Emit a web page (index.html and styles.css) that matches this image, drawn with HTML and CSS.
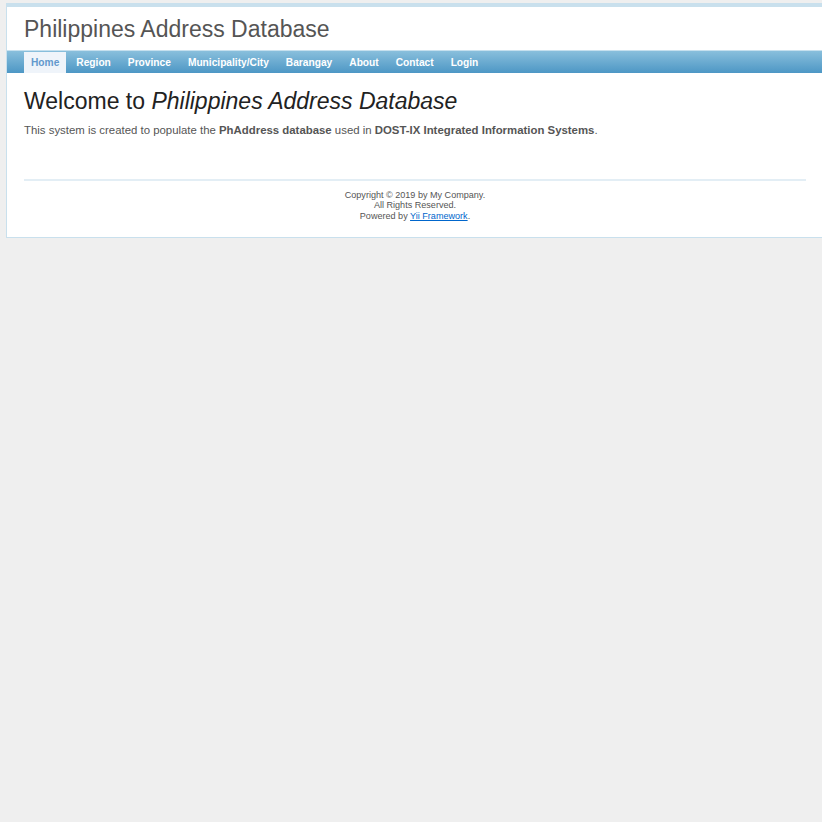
FILE: index.html
```html
<!DOCTYPE html>
<html lang="en">
<head>
<meta charset="utf-8">
<title>Philippines Address Database</title>
<link rel="stylesheet" href="styles.css">
</head>
<body>
<div class="page">
  <div class="header">
    <div class="logo">Philippines Address Database</div>
  </div>
  <div class="mainmenu">
    <ul class="menu-list">
      <li class="menu-item active"><a href="#">Home</a></li>
      <li class="menu-item"><a href="#">Region</a></li>
      <li class="menu-item"><a href="#">Province</a></li>
      <li class="menu-item"><a href="#">Municipality/City</a></li>
      <li class="menu-item"><a href="#">Barangay</a></li>
      <li class="menu-item"><a href="#">About</a></li>
      <li class="menu-item"><a href="#">Contact</a></li>
      <li class="menu-item"><a href="#">Login</a></li>
    </ul>
  </div>
  <div class="content">
    <h1 class="title">Welcome to <i>Philippines Address Database</i></h1>
    <p class="intro">This system is created to populate the <b>PhAddress database</b> used in <b>DOST-IX Integrated Information Systems</b>.</p>
  </div>
  <div class="footer">
    Copyright &copy; 2019 by My Company.<br>
    All Rights Reserved.<br>
    Powered by <a class="footer-link" href="#">Yii Framework</a>.
  </div>
</div>
</body>
</html>
```
FILE: styles.css
```css
html {
  overflow: hidden;
}
body {
  margin: 0;
  padding: 0;
  background: #efefef;
  color: #555;
  font-family: "Liberation Sans", Arial, sans-serif;
  font-size: 11.4px;
}
.page {
  margin: 3px -2px 0 6px;
  background: #fff;
  border: 1px solid #c9e0ed;
}
.header {
  border-top: 3px solid #c9e0ed;
}
.logo {
  padding: 8.5px 17px;
  font-size: 23px;
  color: #555;
  line-height: 26px;
}
.mainmenu {
  height: 23px;
  background: linear-gradient(#c6e0ee 0, #c6e0ee 1px, #89bfdc 1px, #4d97c5 100%);
}
.menu-list {
  list-style: none;
  margin: 0;
  padding: 2px 17px 0;
  display: flex;
  gap: 3px;
}
.menu-item a {
  display: block;
  padding: 0 7px;
  line-height: 21px;
  font-size: 10.2px;
  font-weight: bold;
  color: #fff;
  text-decoration: none;
}
.menu-item.active a {
  color: #6399cd;
  background: #eff4fa;
}
.content {
  padding: 17px;
}
.title {
  margin: 0 0 11.35px;
  font-size: 23px;
  font-weight: normal;
  line-height: 1;
  color: #222;
}
.intro {
  margin: 0 0 16px;
  line-height: 13px;
}
.intro b {
  font-weight: bold;
}
.footer {
  margin: 8.5px 17px 7.5px;
  padding: 9px 8.5px 8px;
  border-top: 2px solid #e3eef5;
  font-size: 9.07px;
  line-height: 10.4px;
  text-align: center;
  color: #555;
}
.footer-link {
  color: #06c;
  text-decoration: underline;
}
```
